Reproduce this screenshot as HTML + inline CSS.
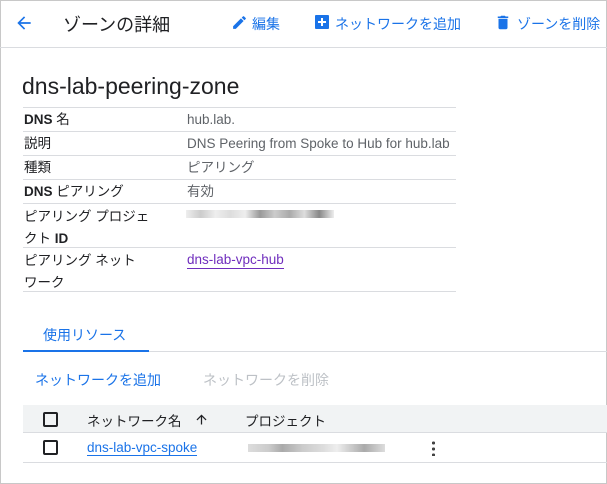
<!DOCTYPE html>
<html><head><meta charset="utf-8"><style>
*{margin:0;padding:0;box-sizing:border-box}
body{width:607px;height:484px;overflow:hidden;background:#fff;font-family:"Liberation Sans","Noto Sans CJK JP",sans-serif;color:#202124;position:relative}
.frame{position:absolute;left:0;top:0;width:607px;height:484px;border:1px solid #c8c8c8}
.abs{position:absolute;white-space:nowrap}
.hdr{position:absolute;left:0;top:47px;width:607px;height:1px;background:#dadce0}
.blue{color:#1a73e8}
.row{position:absolute;left:23px;width:433px;height:1px;background:#dadce0}
.k{position:absolute;left:24px;font-size:13.5px;color:#202124;line-height:20px}
.v{position:absolute;left:187px;font-size:13.5px;color:#5f6368;line-height:20px}
.cb{position:absolute;width:15px;height:15px;border:2px solid #202124;border-radius:2px}
.blur{position:absolute;height:8px}
</style></head><body>
<div class="frame"></div>
<svg class="abs" style="left:14px;top:13px" width="20" height="20" viewBox="0 0 24 24"><path d="M20 11H7.83l5.59-5.59L12 4l-8 8 8 8 1.41-1.41L7.83 13H20v-2z" fill="#1a73e8"/></svg>
<div class="abs" style="left:63px;top:11px;font-size:18px;color:#202124">ゾーンの詳細</div>
<svg class="abs" style="left:231px;top:14px" width="17" height="17" viewBox="0 0 24 24"><path d="M3 17.25V21h3.75L17.81 9.94l-3.75-3.75L3 17.25zM20.71 7.04a1 1 0 000-1.41l-2.34-2.34a1 1 0 00-1.41 0l-1.83 1.83 3.75 3.75 1.83-1.83z" fill="#1a73e8"/></svg>
<div class="abs blue" style="left:252px;top:14px;font-size:14px">編集</div>
<div class="abs" style="left:315px;top:15px;width:14px;height:14px;background:#1a73e8;border-radius:1px"><div style="position:absolute;left:3px;top:6px;width:8px;height:2px;background:#fff"></div><div style="position:absolute;left:6px;top:3px;width:2px;height:8px;background:#fff"></div></div>
<div class="abs blue" style="left:335px;top:14px;font-size:14px">ネットワークを追加</div>
<svg class="abs" style="left:494px;top:13px" width="18" height="19" viewBox="0 0 24 24"><path d="M6 19c0 1.1.9 2 2 2h8c1.1 0 2-.9 2-2V7H6v12zM19 4h-3.5l-1-1h-5l-1 1H5v2h14V4z" fill="#1a73e8"/></svg>
<div class="abs blue" style="left:517px;top:14px;font-size:14px">ゾーンを削除</div>
<div class="hdr"></div>
<div class="abs" style="left:22px;top:73px;font-size:23px;color:#202124">dns-lab-peering-zone</div>
<div class="row" style="top:107px"></div>
<div class="k" style="top:110px;font-weight:bold">DNS <span style="font-weight:normal">名</span></div><div class="v" style="top:110px">hub.lab.</div>
<div class="row" style="top:131px"></div>
<div class="k" style="top:134px">説明</div><div class="v" style="top:134px">DNS Peering from Spoke to Hub for hub.lab</div>
<div class="row" style="top:155px"></div>
<div class="k" style="top:158px">種類</div><div class="v" style="top:158px">ピアリング</div>
<div class="row" style="top:179px"></div>
<div class="k" style="top:182px"><b>DNS</b> ピアリング</div><div class="v" style="top:182px">有効</div>
<div class="row" style="top:203px"></div>
<div class="k" style="top:206px;line-height:22px">ピアリング プロジェ<br>クト <b>ID</b></div>
<div class="blur" style="left:186px;top:210px;width:148px;background:linear-gradient(90deg,#eee,#ccc 10%,#eee 20%,#ddd 30%,#eee 40%,#999 50%,#ccc 60%,#aaa 70%,#ddd 80%,#888 90%,#eee)"></div>
<div class="row" style="top:247px"></div>
<div class="k" style="top:250px;line-height:22px">ピアリング ネット<br>ワーク</div>
<div class="abs" style="left:187px;top:252px;font-size:13.5px;color:#6f2dbd;border-bottom:1px solid #6f2dbd;line-height:16px">dns-lab-vpc-hub</div>
<div class="row" style="top:291px"></div>
<div class="abs blue" style="left:43px;top:325px;font-size:14px">使用リソース</div>
<div class="abs" style="left:23px;top:351px;width:584px;height:1px;background:#dadce0"></div>
<div class="abs" style="left:23px;top:350px;width:126px;height:2px;background:#1a73e8"></div>
<div class="abs blue" style="left:35px;top:370px;font-size:14px">ネットワークを追加</div>
<div class="abs" style="left:203px;top:370px;font-size:14px;color:#bdc1c6">ネットワークを削除</div>
<div class="abs" style="left:23px;top:405px;width:584px;height:28px;background:#f1f3f4;border-bottom:1px solid #dadce0"></div>
<div class="cb" style="left:43px;top:412px"></div>
<div class="abs" style="left:87px;top:410px;font-size:13.5px;color:#202124">ネットワーク名</div>
<svg class="abs" style="left:194px;top:412px" width="15" height="15" viewBox="0 0 24 24"><path d="M4 12l1.41 1.41L11 7.83V20h2V7.83l5.58 5.59L20 12l-8-8-8 8z" fill="#202124"/></svg>
<div class="abs" style="left:245px;top:410px;font-size:13.5px;color:#202124">プロジェクト</div>
<div class="cb" style="left:43px;top:440px"></div>
<div class="abs blue" style="left:87px;top:440px;font-size:13.5px;border-bottom:1px solid #1a73e8;line-height:15px">dns-lab-vpc-spoke</div>
<div class="blur" style="left:248px;top:444px;width:137px;background:linear-gradient(90deg,#ddd,#ccc 15%,#aaa 25%,#ccc 40%,#ddd 55%,#eee 65%,#ccc 75%,#aaa 85%,#ddd)"></div>
<div class="abs" style="left:432px;top:440px;width:3px;height:16px;background:radial-gradient(circle,#444 1.5px,transparent 1.6px) 0 0/3px 6px repeat-y"></div>
<div class="abs" style="left:23px;top:462px;width:584px;height:1px;background:#dadce0"></div>
</body></html>
